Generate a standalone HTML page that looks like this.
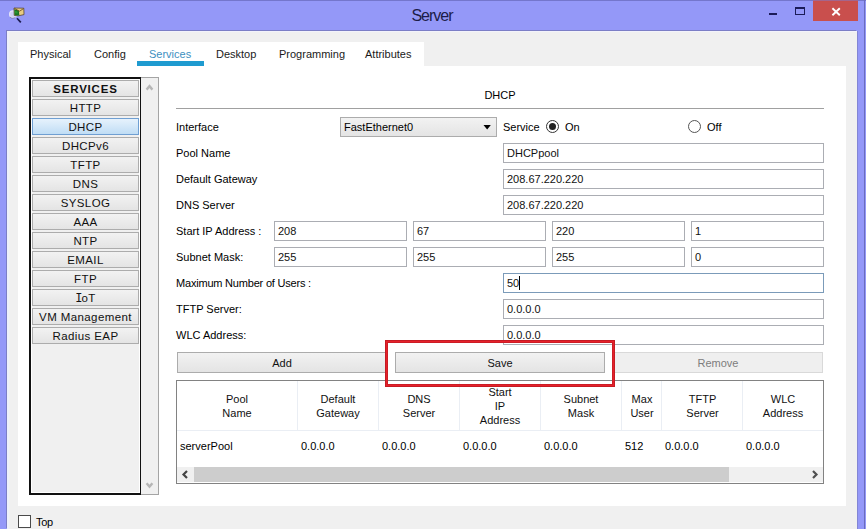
<!DOCTYPE html>
<html><head><meta charset="utf-8">
<style>
*{box-sizing:border-box;margin:0;padding:0}
html,body{width:866px;height:529px;overflow:hidden}
body{position:relative;background:#9498f8;font-family:"Liberation Sans",sans-serif;font-size:11px;color:#000}
.a{position:absolute}
.t{position:absolute;white-space:nowrap;line-height:20px;height:20px}
#frame{left:7px;top:31px;width:850px;height:498px;background:#f0f0f0;border-left:2px solid #eef0fb;border-top:1px solid #f3f3fb;box-shadow:-1px -1px 0 #7c7ec6}
#tabs{left:18px;top:42px;width:406px;height:24px;background:#fff}
#panel{left:18px;top:66px;width:828px;height:440px;background:#fff}
.tab{position:absolute;top:44px;line-height:20px;white-space:nowrap;color:#1a1a1a}
#ul{left:137px;top:61px;width:67px;height:5px;background:#1f9bd0}
#list{left:29px;top:77px;width:112px;height:418px;border-style:solid;border-color:#111;border-width:2px 1px 2px 2px;box-shadow:inset 1px 1px 0 #fff,inset -1px -1px 0 #fff;background:#f0f0f0}
#sb{left:141px;top:77px;width:18px;height:418px;background:#f0f0f0;border:1px solid #a4a4a4;border-left:none}
.btn{position:absolute;left:32px;width:107px;height:17px;border:1px solid #acacac;background:linear-gradient(#f2f2f2,#e4e4e4);text-align:center;line-height:17px;font-size:11.5px;letter-spacing:0.4px;color:#111}
.sel{background:linear-gradient(#e6f2fc,#c0ddf5);border-color:#6f9fd2}
.fld{position:absolute;height:20px;border:1px solid #abadb3;background:#fff;line-height:18px;padding-left:3px;white-space:nowrap;color:#111}
.th{position:absolute;text-align:center;line-height:14px;color:#111}
.pb{position:absolute;height:21px;border:1px solid #acacac;background:linear-gradient(#f2f2f2,#e4e4e4);text-align:center;line-height:20px;color:#111}
</style></head><body>
<!-- title bar -->
<div class="a" style="left:0;top:0;width:866px;height:1px;background:#7476cc"></div>
<div class="a" style="left:864px;top:0;width:1px;height:529px;background:#6a6cbf"></div>
<div class="a" style="left:857px;top:31px;width:1px;height:498px;background:#8285d4"></div>
<svg class="a" style="left:0;top:0" width="30" height="30" viewBox="0 0 30 30">
<circle cx="13" cy="14.2" r="3.4" fill="#cfd0f6" stroke="#e4e4f8" stroke-width="1.2"/>
<path d="M10 17 A3.6 3.6 0 0 0 15.5 17" fill="none" stroke="#7070a8" stroke-width="0.8"/>
<line x1="17" y1="18.2" x2="20.8" y2="22.4" stroke="#1c1c50" stroke-width="1.7"/>
<path d="M14 8 L23.8 8.2 L24 14.6 L18.5 15.8 L14.2 15.4 Z" fill="#e8cc82" stroke="#4a3820" stroke-width="0.7"/>
<path d="M14.3 9.2 L18.8 10.4 L19.4 15.6 L14.5 15.2 Z" fill="#1b7424"/>
<path d="M15 11 L17.5 11.6 L17.8 13.5 L15.2 13.2 Z" fill="#2a9a34"/>
<path d="M14.5 8.4 L19.5 11.2 L23.6 8.6" fill="none" stroke="#6a4a18" stroke-width="0.8"/>
</svg>
<div class="a" style="left:-1px;top:1px;width:866px;text-align:center;line-height:30px;font-size:16px;color:#1c1c48;letter-spacing:-1px">Server</div>
<div class="a" style="left:769px;top:13px;width:8px;height:2px;background:#1b1b58"></div>
<div class="a" style="left:795px;top:7px;width:10px;height:8px;border:1px solid #1b1b58;border-top-width:2px"></div>
<div class="a" style="left:813px;top:0;width:45px;height:21px;background:#c94f4d;border-top:1px solid #a4658c"></div>
<svg class="a" style="left:813px;top:1px" width="45" height="20"><path d="M19.4 7.2 L26.8 14.2 M26.8 7.2 L19.4 14.2" stroke="#fff" stroke-width="1.9"/></svg>

<div id="frame" class="a"></div>
<div id="tabs" class="a"></div>
<div id="panel" class="a"></div>
<div class="tab" style="left:30px">Physical</div>
<div class="tab" style="left:94px">Config</div>
<div class="tab" style="left:149px;color:#3d8fbf">Services</div>
<div class="tab" style="left:216px">Desktop</div>
<div class="tab" style="left:279px">Programming</div>
<div class="tab" style="left:365px">Attributes</div>
<div id="ul" class="a"></div>

<!-- sidebar -->
<div id="list" class="a"></div>
<div id="sb" class="a"></div>
<svg class="a" style="left:143px;top:81px" width="14" height="14"><path d="M3.6 8.6 L6.5 5.2 L9.4 8.6" fill="none" stroke="#b6b6b6" stroke-width="2.4"/></svg>
<svg class="a" style="left:143px;top:478px" width="14" height="14"><path d="M3.6 5.2 L6.5 8.6 L9.4 5.2" fill="none" stroke="#b6b6b6" stroke-width="2.4"/></svg>
<div class="btn" style="top:80px;font-weight:bold;letter-spacing:0.8px">SERVICES</div>
<div class="btn" style="top:99px">HTTP</div>
<div class="btn sel" style="top:118px">DHCP</div>
<div class="btn" style="top:137px">DHCPv6</div>
<div class="btn" style="top:156px">TFTP</div>
<div class="btn" style="top:175px">DNS</div>
<div class="btn" style="top:194px">SYSLOG</div>
<div class="btn" style="top:213px">AAA</div>
<div class="btn" style="top:232px">NTP</div>
<div class="btn" style="top:251px">EMAIL</div>
<div class="btn" style="top:270px">FTP</div>
<div class="btn" style="top:289px"><span style="font-family:'Liberation Mono';font-size:12px;letter-spacing:-1px">I</span>oT</div>
<div class="btn" style="top:308px">VM Management</div>
<div class="btn" style="top:327px">Radius EAP</div>

<!-- form -->
<div class="t" style="left:176px;top:85px;width:648px;text-align:center">DHCP</div>
<div class="a" style="left:176px;top:108px;width:648px;height:1px;background:#a0a0a0"></div>

<div class="t" style="left:176px;top:117px">Interface</div>
<div class="a" style="left:340px;top:117px;width:157px;height:20px;border:1px solid #acacac;background:linear-gradient(#f2f2f2,#e4e4e4)"></div>
<div class="t" style="left:344px;top:117px">FastEthernet0</div>
<svg class="a" style="left:483px;top:124px" width="9" height="6"><path d="M0.5 1 L7.8 1 L4.15 5.4 Z" fill="#000"/></svg>
<div class="t" style="left:503px;top:117px">Service</div>
<div class="a" style="left:546px;top:120px;width:13px;height:13px;border-radius:50%;border:1px solid #333;background:#fff"></div>
<div class="a" style="left:549px;top:123px;width:7px;height:7px;border-radius:50%;background:#222"></div>
<div class="t" style="left:565px;top:117px">On</div>
<div class="a" style="left:688px;top:120px;width:13px;height:13px;border-radius:50%;border:1px solid #555;background:#fff"></div>
<div class="t" style="left:707px;top:117px">Off</div>

<div class="t" style="left:176px;top:143px">Pool Name</div>
<div class="fld" style="left:503px;top:143px;width:321px">DHCPpool</div>
<div class="t" style="left:176px;top:169px">Default Gateway</div>
<div class="fld" style="left:503px;top:169px;width:321px">208.67.220.220</div>
<div class="t" style="left:176px;top:195px">DNS Server</div>
<div class="fld" style="left:503px;top:195px;width:321px">208.67.220.220</div>

<div class="t" style="left:176px;top:221px">Start IP Address :</div>
<div class="fld" style="left:274px;top:221px;width:133px">208</div>
<div class="fld" style="left:413px;top:221px;width:133px">67</div>
<div class="fld" style="left:552px;top:221px;width:133px">220</div>
<div class="fld" style="left:691px;top:221px;width:133px">1</div>
<div class="t" style="left:176px;top:247px">Subnet Mask:</div>
<div class="fld" style="left:274px;top:247px;width:133px">255</div>
<div class="fld" style="left:413px;top:247px;width:133px">255</div>
<div class="fld" style="left:552px;top:247px;width:133px">255</div>
<div class="fld" style="left:691px;top:247px;width:133px">0</div>

<div class="t" style="left:176px;top:273px;letter-spacing:-0.2px">Maximum Number of Users :</div>
<div class="fld" style="left:503px;top:273px;width:321px;border-color:#7b9bb9">50<span style="display:inline-block;width:1px;height:14px;background:#000;vertical-align:-3px"></span></div>
<div class="t" style="left:176px;top:299px">TFTP Server:</div>
<div class="fld" style="left:503px;top:299px;width:321px">0.0.0.0</div>
<div class="t" style="left:176px;top:325px">WLC Address:</div>
<div class="fld" style="left:503px;top:325px;width:321px">0.0.0.0</div>

<div class="pb" style="left:177px;top:352px;width:210px">Add</div>
<div class="pb" style="left:395px;top:352px;width:210px">Save</div>
<div class="pb" style="left:613px;top:352px;width:210px;border-color:#d9d9d9;background:#efefef;color:#7d7d7d">Remove</div>

<!-- table -->
<div class="a" style="left:176px;top:380px;width:648px;height:104px;border:1px solid #828282;background:#fff"></div>
<div class="a" style="left:177px;top:430px;width:646px;height:1px;background:#eaeef4"></div>
<div class="a" style="left:297px;top:381px;width:1px;height:49px;background:#eaeef4"></div>
<div class="a" style="left:378px;top:381px;width:1px;height:49px;background:#eaeef4"></div>
<div class="a" style="left:459px;top:381px;width:1px;height:49px;background:#eaeef4"></div>
<div class="a" style="left:540px;top:381px;width:1px;height:49px;background:#eaeef4"></div>
<div class="a" style="left:621px;top:381px;width:1px;height:49px;background:#eaeef4"></div>
<div class="a" style="left:661px;top:381px;width:1px;height:49px;background:#eaeef4"></div>
<div class="a" style="left:742px;top:381px;width:1px;height:49px;background:#eaeef4"></div>
<div class="th" style="left:177px;width:120px;top:392px">Pool<br>Name</div>
<div class="th" style="left:298px;width:80px;top:392px">Default<br>Gateway</div>
<div class="th" style="left:379px;width:80px;top:392px">DNS<br>Server</div>
<div class="th" style="left:460px;width:80px;top:385px">Start<br>IP<br>Address</div>
<div class="th" style="left:541px;width:80px;top:392px">Subnet<br>Mask</div>
<div class="th" style="left:622px;width:40px;top:392px">Max<br>User</div>
<div class="th" style="left:663px;width:79px;top:392px">TFTP<br>Server</div>
<div class="th" style="left:743px;width:80px;top:392px">WLC<br>Address</div>
<div class="t" style="left:180px;top:436px">serverPool</div>
<div class="t" style="left:301px;top:436px">0.0.0.0</div>
<div class="t" style="left:382px;top:436px">0.0.0.0</div>
<div class="t" style="left:463px;top:436px">0.0.0.0</div>
<div class="t" style="left:544px;top:436px">0.0.0.0</div>
<div class="t" style="left:625px;top:436px">512</div>
<div class="t" style="left:665px;top:436px">0.0.0.0</div>
<div class="t" style="left:746px;top:436px">0.0.0.0</div>
<div class="a" style="left:177px;top:467px;width:646px;height:15px;background:#f0f0f0"></div>
<div class="a" style="left:194px;top:467px;width:535px;height:15px;background:#cdcdcd"></div>
<svg class="a" style="left:177px;top:467px" width="17" height="15"><path d="M10 4 L6.5 7.5 L10 11" fill="none" stroke="#444" stroke-width="2.2"/></svg>
<svg class="a" style="left:806px;top:467px" width="17" height="15"><path d="M7 4 L10.5 7.5 L7 11" fill="none" stroke="#505050" stroke-width="2.2"/></svg>

<!-- bottom -->
<div class="a" style="left:18px;top:515px;width:13px;height:13px;border:1px solid #4a4a4a;background:#fff"></div>
<div class="t" style="left:36px;top:512px;letter-spacing:-0.3px">Top</div>
<div class="a" style="left:385px;top:340px;width:230px;height:47px;border:1px solid #c41b23;box-shadow:inset 0 0 0 1px #e6212b,inset 0 0 0 2px #cc1d25"></div>
</body></html>
